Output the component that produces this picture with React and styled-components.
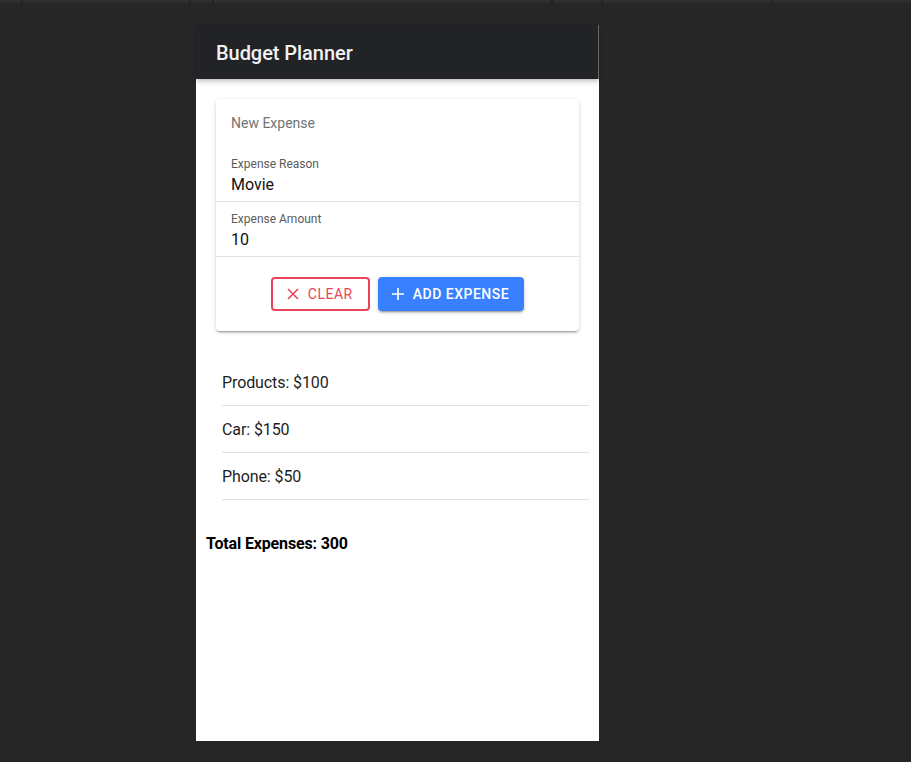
import React from 'react'
import styled, { createGlobalStyle } from 'styled-components'

const GlobalStyle = createGlobalStyle`
  html, body {
    margin: 0;
    padding: 0;
    background: #262626;
    font-family: Roboto, 'Liberation Sans', sans-serif;
  }
`

const TopStrip = styled.div`
  height: 3px;
  background: #2e2e2e;
  display: flex;
`

const Tick = styled.span`
  width: 2px;
  height: 3px;
  margin-left: ${p => p.left}px;
  background: #222;
`

const Phone = styled.div`
  width: 403px;
  height: 716px;
  margin: 22px 0 0 196px;
  background: #fff;
  display: flex;
  flex-direction: column;
`

const Header = styled.header`
  height: 54px;
  flex: none;
  box-sizing: border-box;
  background: #222327;
  border-right: 1px solid #6a6a6a;
  box-shadow: 0 2px 4px -1px rgba(0, 0, 0, 0.2), 0 4px 5px 0 rgba(0, 0, 0, 0.1);
  display: flex;
  align-items: center;
  padding: 2px 0 0 20px;
  position: relative;
  z-index: 1;
`

const Title = styled.h1`
  margin: 0;
  font-size: 20px;
  font-weight: 500;
  color: #f2f2f2;
  letter-spacing: -0.05px;
`

const Content = styled.main`
  flex: 1;
  display: flex;
  flex-direction: column;
`

const Card = styled.section`
  margin: 20px 20px 0;
  background: #fff;
  border-radius: 4px;
  box-shadow: 0 3px 1px -2px rgba(0, 0, 0, 0.2), 0 2px 2px 0 rgba(0, 0, 0, 0.14),
    0 1px 5px 0 rgba(0, 0, 0, 0.12);
`

const CardTitle = styled.div`
  padding: 16px 15px 15px;
  font-size: 14px;
  line-height: 17px;
  color: #737373;
`

const Field = styled.div`
  display: flex;
  flex-direction: column;
  padding: 10px 15px 6px;
  border-bottom: 1px solid #e3e3e3;
`

const Label = styled.label`
  font-size: 12px;
  line-height: 14px;
  color: #5c5c5c;
`

const Value = styled.div`
  margin-top: 4px;
  font-size: 16px;
  line-height: 20px;
  color: #111;
`

const Actions = styled.div`
  display: flex;
  justify-content: center;
  gap: 8px;
  padding: 20px 0;
`

const Button = styled.button`
  height: 34px;
  box-sizing: border-box;
  display: flex;
  align-items: center;
  gap: 8px;
  border-radius: 4px;
  font-family: Roboto, 'Liberation Sans', sans-serif;
  font-size: 14px;
  font-weight: 500;
  letter-spacing: 0.5px;
  text-transform: uppercase;
  cursor: pointer;
  ${p =>
    p.outline
      ? `
    background: #fff;
    color: #eb445a;
    border: 2px solid #eb445a;
    padding: 0 15px 0 13px;
    font-weight: 400;
  `
      : `
    background: #3880ff;
    color: #fff;
    border: none;
    padding: 0 15px 0 13px;
    box-shadow: 0 3px 1px -2px rgba(0,0,0,.2), 0 2px 2px 0 rgba(0,0,0,.14), 0 1px 5px 0 rgba(0,0,0,.12);
  `}
`

const Icon = styled.svg`
  width: 14px;
  height: 14px;
  flex: none;
`

const List = styled.ul`
  list-style: none;
  margin: 28px 10px 0 26px;
  padding: 0;
`

const Row = styled.li`
  height: 46px;
  display: flex;
  align-items: center;
  border-bottom: 1px solid #e0e0e0;
  font-size: 16px;
  letter-spacing: -0.1px;
  color: #1e1e1e;
`

const Total = styled.p`
  margin: 34px 0 0 10px;
  font-size: 16px;
  line-height: 19px;
  font-weight: 700;
  letter-spacing: -0.15px;
  color: #000;
`

const expenses = [
  { reason: 'Products', amount: 100 },
  { reason: 'Car', amount: 150 },
  { reason: 'Phone', amount: 50 },
]

const CloseIcon = () => (
  <Icon viewBox="0 0 14 14">
    <path d="M2 2 L12 12 M12 2 L2 12" stroke="currentColor" strokeWidth="1.6" fill="none" />
  </Icon>
)

const PlusIcon = () => (
  <Icon viewBox="0 0 14 14">
    <path d="M7 1 V13 M1 7 H13" stroke="currentColor" strokeWidth="1.6" fill="none" />
  </Icon>
)

export default function App() {
  const total = expenses.reduce((s, e) => s + e.amount, 0)
  return (
    <>
      <GlobalStyle />
      <TopStrip>
        <Tick left={21} />
        <Tick left={166} />
        <Tick left={21} />
        <Tick left={337} />
        <Tick left={48} />
        <Tick left={168} />
      </TopStrip>
      <Phone>
        <Header>
          <Title>Budget Planner</Title>
        </Header>
        <Content>
          <Card>
            <CardTitle>New Expense</CardTitle>
            <Field>
              <Label>Expense Reason</Label>
              <Value>Movie</Value>
            </Field>
            <Field>
              <Label>Expense Amount</Label>
              <Value>10</Value>
            </Field>
            <Actions>
              <Button outline>
                <CloseIcon />
                Clear
              </Button>
              <Button>
                <PlusIcon />
                Add Expense
              </Button>
            </Actions>
          </Card>
          <List>
            {expenses.map(e => (
              <Row key={e.reason}>
                {e.reason}: ${e.amount}
              </Row>
            ))}
          </List>
          <Total>Total Expenses: {total}</Total>
        </Content>
      </Phone>
    </>
  )
}
